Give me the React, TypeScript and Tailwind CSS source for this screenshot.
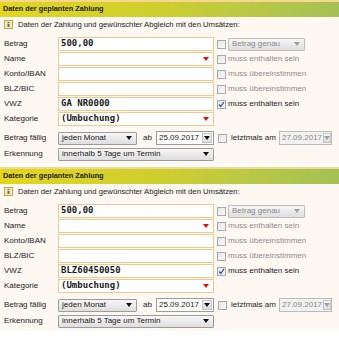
import React from "react";

// small building blocks of the old form
const Arrow = ({ disabled = false }: { disabled?: boolean }) => (
  <svg width="6" height="4" viewBox="0 0 6 4">
    <path d="M0 0h6L3 4z" fill={disabled ? "#a0a0a0" : "#111"} />
  </svg>
);

const Checkbox = ({ checked = false }: { checked?: boolean }) => (
  <div className="w-[9px] h-[9px] shrink-0 border border-[#a9a9a9] bg-gradient-to-br from-[#e6e6e6] to-[#fafafa] flex items-center justify-center">
    {checked && (
      <svg width="7" height="7" viewBox="0 0 7 7">
        <path d="M1 3.5l1.8 2L6 1" stroke="#2a4f9a" strokeWidth="1.2" fill="none" />
      </svg>
    )}
  </div>
);

const TextInput = ({ value = "", dropdown = false }: { value?: string; dropdown?: boolean }) => (
  <div className="relative w-[156px] h-[14px] shrink-0 border border-[#f3c790] bg-white pl-[2px] flex items-center font-['DejaVu_Sans_Mono',monospace] text-[9px] font-bold text-[#1b1b1b] whitespace-pre">
    {value}
    {dropdown && (
      <svg className="absolute right-[4px] top-[4px]" width="6" height="4" viewBox="0 0 6 4">
        <path d="M0 0h6L3 4z" fill="#e01010" />
      </svg>
    )}
  </div>
);

const Select = ({ text, width, disabled = false }: { text: string; width: string; disabled?: boolean }) => (
  <div
    className={`${width} h-[13px] shrink-0 flex items-center justify-between pl-[3px] pr-[4px] border ${
      disabled ? "border-[#bdbdbd] text-[#8a8a8a]" : "border-[#9c9c9c] text-[#1b1b1b]"
    } bg-gradient-to-b from-[#f7f7f7] to-[#dedede] rounded-[1px]`}
  >
    <span>{text}</span>
    <Arrow disabled={disabled} />
  </div>
);

const DateBox = ({ value, width, disabled = false }: { value: string; width: string; disabled?: boolean }) => (
  <div
    className={`${width} h-[14px] shrink-0 flex items-stretch border ${
      disabled ? "border-[#bcbcbc] bg-[#f1f1f1] text-[#8a8a8a]" : "border-[#9c9c9c] bg-white text-[#1b1b1b]"
    }`}
  >
    <span className="flex-1 pl-[2px] leading-[12px]">{value}</span>
    <div className="w-[10px] m-[1px] border border-[#c4c4c4] bg-gradient-to-b from-[#f8f8f8] to-[#dcdcdc] flex items-center justify-center">
      <Arrow disabled={disabled} />
    </div>
  </div>
);

const InfoIcon = () => (
  <svg width="9" height="9" viewBox="0 0 9 9" className="shrink-0">
    <rect x="0.5" y="0.5" width="8" height="8" fill="#fbe7a6" stroke="#c9a24a" />
    <rect x="3.5" y="2" width="2" height="1.2" fill="#4a6fae" />
    <rect x="3.5" y="4" width="2" height="3" fill="#4a6fae" />
  </svg>
);

type Row = {
  label: string;
  value?: string;
  dropdown?: boolean;
  extra?: React.ReactNode;
};

const FieldRow = ({ label, value, dropdown, extra }: Row) => (
  <div className="h-[15px] flex items-start">
    <div className="w-[58px] shrink-0 pl-[4px] leading-[14px]">{label}</div>
    <TextInput value={value} dropdown={dropdown} />
    {extra && <div className="ml-[3px] h-[14px] flex items-center gap-[2px]">{extra}</div>}
  </div>
);

const Hint = ({ text, checked = false }: { text: string; checked?: boolean }) => (
  <>
    <Checkbox checked={checked} />
    <span className={checked ? "text-[#1b1b1b]" : "text-[#8c8c8c]"}>{text}</span>
  </>
);

function Planned({ vwz }: { vwz: string }) {
  return (
    <section className="h-[167px] flex flex-col">
      <div className="h-[17px] shrink-0 border-t-2 border-[#f7d68e] bg-gradient-to-r from-[#e3d61c] via-[#ccce30] to-[#a3c155] flex items-center pl-[3px] text-[7.3px] font-bold text-[#1a1a1a]">
        Daten der geplanten Zahlung
      </div>
      <div className="flex-1 bg-[#fdf8f2] mb-[3px]">
        <div className="h-[15px] flex items-center gap-[5px] pl-[4px] text-[7.7px] text-[#1b1b1b]">
          <InfoIcon />
          <span>Daten der Zahlung und gewünschter Abgleich mit den Umsätzen:</span>
        </div>
        <div className="mt-[5px]">
          <FieldRow
            label="Betrag"
            value="500,00"
            extra={
              <>
                <Checkbox />
                <Select text="Betrag genau" width="w-[77px]" disabled />
              </>
            }
          />
          <FieldRow label="Name" dropdown extra={<Hint text="muss enthalten sein" />} />
          <FieldRow label="Konto/IBAN" extra={<Hint text="muss übereinstimmen" />} />
          <FieldRow label="BLZ/BIC" extra={<Hint text="muss übereinstimmen" />} />
          <FieldRow label="VWZ" value={vwz} extra={<Hint text="muss enthalten sein" checked />} />
          <FieldRow label="Kategorie" value="(Umbuchung)" dropdown />
        </div>
        <div className="mt-[3px] h-[16px] flex items-center">
          <div className="w-[58px] shrink-0 pl-[4px]">Betrag fällig</div>
          <Select text="jeden Monat" width="w-[79px]" />
          <span className="w-[19px] shrink-0 pl-[6px]">ab</span>
          <DateBox value="25.09.2017" width="w-[58px]" />
          <div className="ml-[4px]">
            <Checkbox />
          </div>
          <span className="w-[52px] shrink-0 pl-[4px]">letztmals am</span>
          <DateBox value="27.09.2017" width="w-[53px]" disabled />
        </div>
        <div className="h-[16px] flex items-center">
          <div className="w-[58px] shrink-0 pl-[4px]">Erkennung</div>
          <Select text="innerhalb 5 Tage um Termin" width="w-[156px]" />
        </div>
      </div>
    </section>
  );
}

export default function App() {
  return (
    <div className="w-[339px] h-[339px] overflow-hidden bg-white font-['Liberation_Sans',Arial,sans-serif] text-[8px] text-[#1b1b1b]">
      <Planned vwz="GA NR0000" />
      <Planned vwz="BLZ60450050" />
    </div>
  );
}
